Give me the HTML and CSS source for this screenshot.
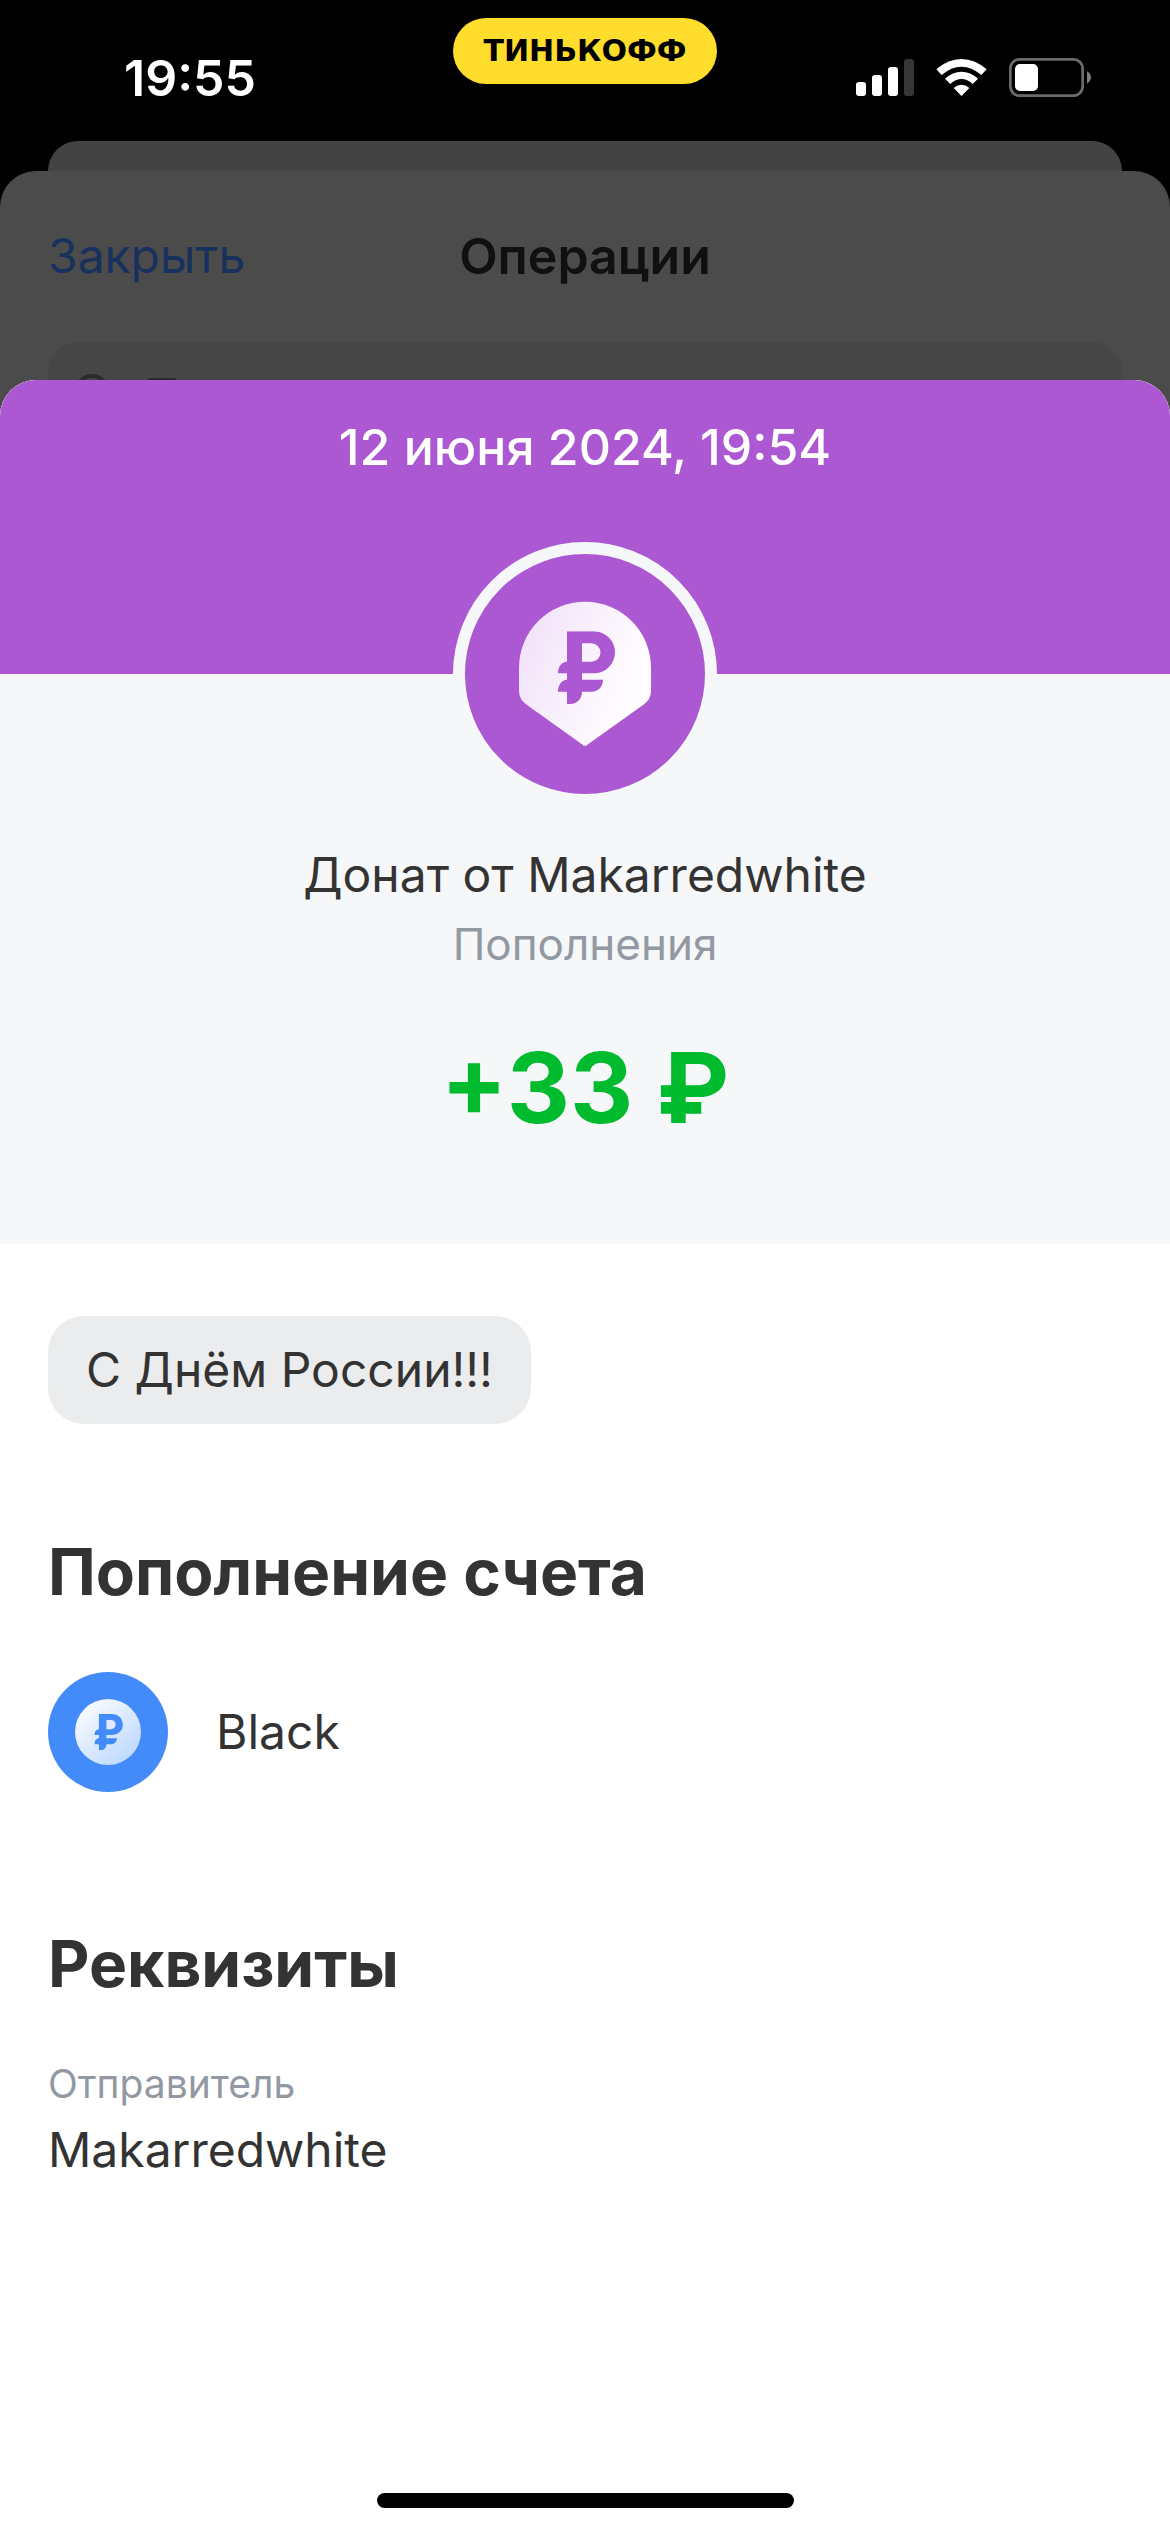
FILE: index.html
```html
<!DOCTYPE html>
<html lang="ru">
<head>
<meta charset="utf-8">
<meta name="viewport" content="width=device-width, initial-scale=1">
<title>Донат от Makarredwhite</title>
<link rel="stylesheet" href="styles.css">
</head>
<body>
<svg class="defs" aria-hidden="true">
  <symbol id="ruble" viewBox="384 334 171 218">
    <path fill-rule="evenodd" d="M411 334H492A63 63 0 0 1 492 460H456V479H519C519 500 504 515 485 515H456C456 537 440 552 420 552H411V515H384C384 494 395 479 411 479V460H384C384 440 395 425 411 425ZM456 370V425H484A27 27 0 0 0 484 370Z"/>
  </symbol>
</svg>
<div class="screen">
  <header class="status">
    <time class="status-time">19:55</time>
    <span class="status-pill">ТИНЬКОФФ</span>
    <svg class="status-icons" viewBox="48 54 708 120" aria-hidden="true">
      <g fill="#fff">
        <rect x="48" y="126" width="30" height="42" rx="9"/>
        <rect x="96" y="105" width="30" height="63" rx="9"/>
        <rect x="144" y="81" width="30" height="87" rx="9"/>
        <rect x="192" y="57" width="30" height="111" rx="9" fill="#363636"/>
        <path d="M289 88Q325 57 364.500 57T440 88L424 105Q395 80 364.500 80T305 105Z"/>
        <path d="M315 116Q338 95 364.500 95T414 116L398 132Q382 117 364.500 117T331 132Z"/>
        <path d="M341 144Q352 134 364.500 134T388 144L364.500 168Z"/>
        <rect x="525" y="72" width="69" height="81" rx="15"/>
      </g>
      <rect x="511" y="58" width="217" height="109" rx="28" fill="none" stroke="#6b6b6b" stroke-width="8"/>
      <path d="M741 94Q753 101 753 112T741 131Z" fill="#7c7c7c"/>
    </svg>
  </header>

  <div class="back-card"></div>

  <section class="operations">
    <div class="nav">
      <button class="nav-close" type="button">Закрыть</button>
      <h2 class="nav-title">Операции</h2>
    </div>
    <label class="search">
      <svg class="search-icon" viewBox="0 0 48 48" aria-hidden="true">
        <circle cx="20" cy="20" r="16"/><path d="M32 32L44 44"/>
      </svg>
      <input class="search-input" type="search" placeholder="Поиск">
    </label>
  </section>

  <main class="details">
    <section class="hero">
      <time class="hero-date">12 июня 2024, 19:54</time>
      <svg class="avatar" viewBox="105 102 720 720" aria-hidden="true">
        <defs>
          <linearGradient id="pin" x1="0" y1="0.300" x2="1" y2="0.700">
            <stop offset="0" stop-color="#f2e2f9"/><stop offset="0.800" stop-color="#fefcff"/>
          </linearGradient>
        </defs>
        <path fill="url(#pin)" d="M267 443A198 198 0 0 1 663 443V512Q663 538 640 554L472 674Q465 681 458 674L290 554Q267 538 267 512Z"/>
        <use href="#ruble" x="384" y="334" width="171" height="218" fill="#ab58d2"/>
      </svg>
      <h1 class="hero-title">Донат от Makarredwhite</h1>
      <p class="hero-category">Пополнения</p>
      <p class="hero-amount">+33 ₽</p>
    </section>

    <section class="content">
      <p class="message">С Днём России!!!</p>

      <h2 class="heading">Пополнение счета</h2>
      <div class="account">
        <svg class="account-icon" viewBox="144 123 360 360" aria-hidden="true">
          <defs>
            <linearGradient id="coin" x1="0.200" y1="0.100" x2="0.900" y2="0.900">
              <stop offset="0" stop-color="#f7faff"/><stop offset="1" stop-color="#bcd7fe"/>
            </linearGradient>
          </defs>
          <circle cx="324" cy="303" r="99" fill="url(#coin)"/>
          <use href="#ruble" x="283" y="249" width="86" height="109" fill="#428bf9"/>
        </svg>
        <span class="account-name">Black</span>
      </div>

      <h2 class="heading">Реквизиты</h2>
      <dl class="requisites">
        <dt>Отправитель</dt>
        <dd>Makarredwhite</dd>
      </dl>
    </section>

    <div class="home-indicator"></div>
  </main>
</div>
</body>
</html>
```
FILE: styles.css
```css
* {
  box-sizing: border-box;
  margin: 0;
}

body {
  background: #000;
  color: #333;
  font: 400 48px/60px Inter, "Noto Sans", sans-serif;
}

.defs {
  position: absolute;
  width: 0;
  height: 0;
}

.screen {
  display: flex;
  flex-direction: column;
  min-height: 100vh;
}

/* Status bar */
.status {
  display: grid;
  grid-template-columns: 1fr auto 1fr;
  align-items: start;
  height: 141px;
  padding: 18px 78px 0 124px;
}

.status-time {
  padding-top: 30px;
  color: #fff;
  font-size: 50px;
  font-weight: 600;
}

.status-pill {
  margin-right: 46px;
  padding: 0 30px;
  border-radius: 33px;
  background: #ffdd2d;
  color: #000;
  font: 700 30px/66px "DejaVu Sans", sans-serif;
}

.status-icons {
  justify-self: end;
  width: 236px;
  height: 40px;
  margin-top: 40px;
}

/* Dimmed screens below the sheet */
.back-card {
  height: 30px;
  margin: 0 48px;
  border-radius: 30px 30px 0 0;
  background: #434343;
}

.operations {
  padding: 0 48px;
  border-radius: 36px 36px 0 0;
  background: #4b4b4b;
}

.nav {
  display: grid;
  grid-template-columns: 1fr auto 1fr;
  align-items: center;
  height: 171px;
  padding-bottom: 2px;
}

.nav-close {
  justify-self: start;
  padding: 0;
  border: 0;
  background: none;
  color: #18315c;
  font: inherit;
}

.nav-title {
  color: #101010;
  font-size: 50px;
  font-weight: 600;
}

.search {
  display: flex;
  align-items: center;
  gap: 24px;
  height: 108px;
  padding: 0 24px;
  border-radius: 30px;
  background: #464646;
}

.search-icon {
  width: 48px;
  height: 48px;
  fill: none;
  stroke: #2b2b2b;
  stroke-width: 4;
}

.search-input {
  flex: 1;
  padding: 0;
  border: 0;
  background: none;
  font: inherit;
}

.search-input::placeholder {
  color: #2b2b2b;
}

/* Operation sheet */
.details {
  display: flex;
  flex: 1;
  flex-direction: column;
  position: relative;
  margin-top: -70px;
  border-radius: 36px 36px 0 0;
  background: #fff;
  overflow: hidden;
}

.hero {
  display: flex;
  flex-direction: column;
  align-items: center;
  padding-bottom: 96px;
  background: #f5f7f9;
  text-align: center;
}

.hero-date {
  width: 100%;
  height: 294px;
  padding-top: 37px;
  background: #ab58d2;
  color: #fff;
  font-size: 50px;
  font-weight: 500;
}

.avatar {
  width: 264px;
  height: 264px;
  margin-top: -132px;
  border: 12px solid #f5f7f9;
  border-radius: 50%;
  background: #ab58d2;
}

.hero-title {
  margin-top: 39px;
  font-size: 48px;
  font-weight: 400;
}

.hero-category {
  margin-top: 12px;
  color: #9299a2;
  font-size: 44px;
  line-height: 54px;
}

.hero-amount {
  margin-top: 57px;
  color: #00bb2d;
  font-size: 98px;
  font-weight: 700;
  line-height: 120px;
}

.content {
  display: flex;
  flex-direction: column;
  align-items: flex-start;
  padding: 72px 48px;
}

.message {
  padding: 24px 38px;
  border-radius: 36px;
  background: #ebeced;
}

.heading {
  margin-top: 108px;
  font-size: 64px;
  font-weight: 700;
  line-height: 80px;
}

.account {
  display: flex;
  align-items: center;
  gap: 48px;
  margin: 60px 0 24px;
}

.account-icon {
  width: 120px;
  height: 120px;
  border-radius: 50%;
  background: #428bf9;
}

.requisites {
  margin-top: 56px;
}

.requisites dt {
  margin-bottom: 12px;
  color: #9299a2;
  font-size: 39px;
  line-height: 48px;
}

.requisites dd {
  margin: 0;
}

.home-indicator {
  width: 417px;
  height: 15px;
  margin: auto auto 24px;
  border-radius: 8px;
  background: #000;
}
```
